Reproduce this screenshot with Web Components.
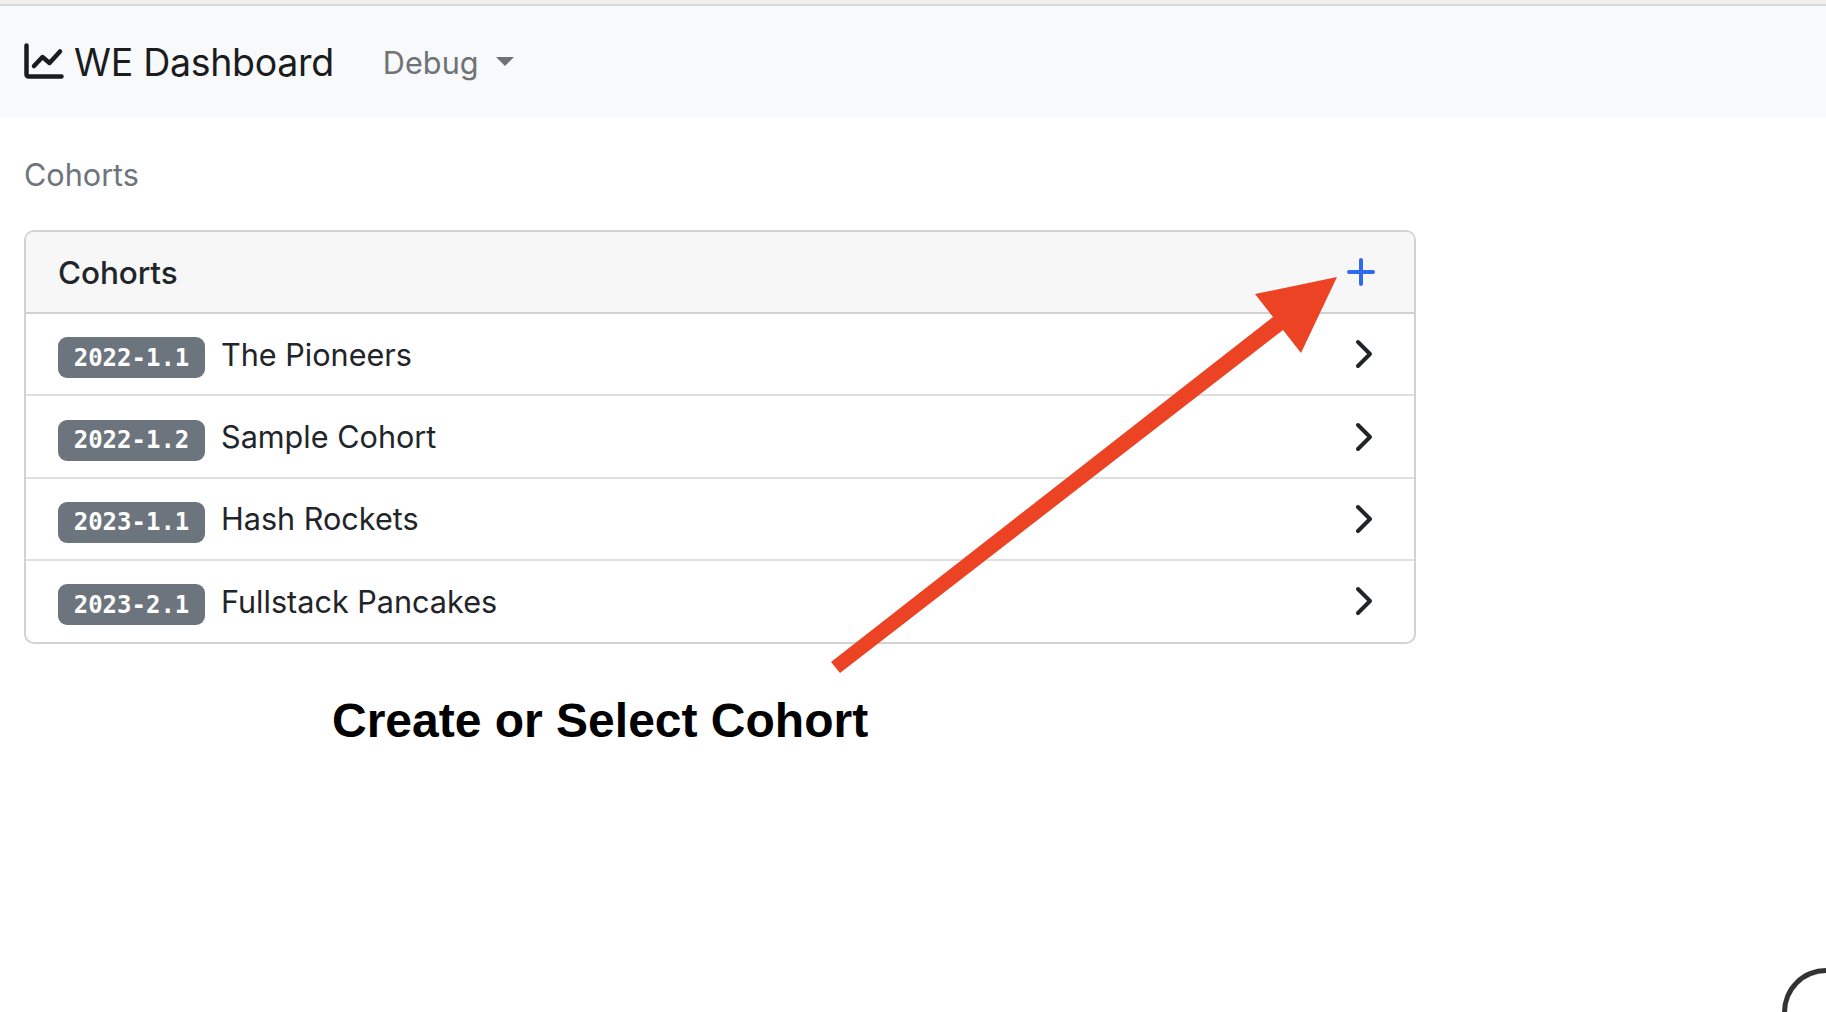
<!DOCTYPE html>
<html>
<head>
<meta charset="utf-8">
<title>WE Dashboard</title>
<style>
  html, body { margin: 0; height: 100%; background: #fff; overflow: hidden; }
  body { position: relative; font-family: Inter, "Liberation Sans", sans-serif; color: #212529; }
</style>
</head>
<body>
<we-navbar brand="WE Dashboard" menu="Debug"></we-navbar>
<we-breadcrumb>Cohorts</we-breadcrumb>
<we-card heading="Cohorts">
  <we-cohort-row code="2022-1.1">The Pioneers</we-cohort-row>
  <we-cohort-row code="2022-1.2">Sample Cohort</we-cohort-row>
  <we-cohort-row code="2023-1.1">Hash Rockets</we-cohort-row>
  <we-cohort-row code="2023-2.1">Fullstack Pancakes</we-cohort-row>
</we-card>
<we-annotation>Create or Select Cohort</we-annotation>
<we-help-button></we-help-button>

<script>
class WeNavbar extends HTMLElement {
  constructor() {
    super();
    const root = this.attachShadow({ mode: 'open' });
    root.innerHTML = `
      <style>
        :host { display: block; background: #f8f9fa; }
        .strip { height: 4px; background: #f1f0ee; border-bottom: 2px solid #d6d9dd; }
        .bar { height: 112px; display: flex; align-items: center; padding-left: 24px; }
        .brand { display: flex; align-items: center; gap: 10px; font-size: 37.500px; color: #1a1c1e; letter-spacing: -0.3px; }
        .brand svg { width: 40px; height: 36px; flex: none; margin-top: -2px; }
        .menu { display: flex; align-items: center; margin-left: 49px; font-size: 30.600px; color: #6f7276; }
        .menu span { letter-spacing: 0.05px; }
        .caret { width: 0; height: 0; margin-left: 17px; margin-top: -2px; border: 9px solid transparent; border-top-color: #6f7276; border-bottom: 0; }
      </style>
      <div class="strip"></div>
      <div class="bar">
        <div class="brand">
          <svg viewBox="0 0 40 36" fill="none" stroke="#1a1c1e" stroke-linecap="round" stroke-linejoin="round">
            <path d="M2.500 2.500v29a2 2 0 0 0 2 2H37.500" stroke-width="4.500"/>
            <path d="M10 23l8.500-9 7 6L36 8.500" stroke-width="4.500"/>
          </svg>
          <span></span>
        </div>
        <div class="menu"><span></span><i class="caret"></i></div>
      </div>`;
    root.querySelector('.brand span').textContent = this.getAttribute('brand');
    root.querySelector('.menu span').textContent = this.getAttribute('menu');
  }
}

class WeBreadcrumb extends HTMLElement {
  constructor() {
    super();
    const root = this.attachShadow({ mode: 'open' });
    root.innerHTML = `
      <style>
        :host { display: block; padding: 38px 24px 0; font-size: 30.600px; line-height: 37px; color: #6c757d; }
      </style>
      <slot></slot>`;
  }
}

class WeCard extends HTMLElement {
  constructor() {
    super();
    const root = this.attachShadow({ mode: 'open' });
    root.innerHTML = `
      <style>
        :host { display: block; box-sizing: border-box; width: 1392px; margin: 37px 0 0 24px; border: 2px solid #d2d2d2; border-radius: 10px; overflow: hidden; }
        .head { height: 82px; box-sizing: border-box; display: flex; align-items: center; justify-content: space-between; padding: 0 39px 0 32px; background: #f7f7f7; border-bottom: 2px solid #d2d2d2; font-size: 31.500px; font-weight: 500; color: #212529; letter-spacing: -0.1px; }
        svg { width: 28px; height: 28px; }
      </style>
      <div class="head">
        <span></span>
        <svg viewBox="0 0 28 28" fill="none" stroke="#2f6bf0" stroke-width="4" stroke-linecap="round"><path d="M14 2v24M2 14h24"/></svg>
      </div>
      <slot></slot>`;
    root.querySelector('.head span').textContent = this.getAttribute('heading');
  }
}

class WeCohortRow extends HTMLElement {
  constructor() {
    super();
    const root = this.attachShadow({ mode: 'open' });
    root.innerHTML = `
      <style>
        :host { display: flex; align-items: center; box-sizing: border-box; height: 82.400px; padding: 0 40px 0 32px; border-bottom: 2px solid #dfdfdf; font-size: 30.600px; color: #212529; }
        :host(:last-child) { border-bottom: 0; height: 80.500px; }
        .code { box-sizing: border-box; width: 147px; height: 41px; margin-top: 7px; display: flex; align-items: center; justify-content: center; background: #6c757d; border-radius: 9px; color: #fff; font: 700 24px "DejaVu Sans Mono", "Liberation Mono", monospace; }
        .name { flex: 1; margin-left: 16px; }
        svg { width: 20px; height: 30px; flex: none; }
      </style>
      <span class="code"></span>
      <span class="name"><slot></slot></span>
      <svg viewBox="0 0 20 30" fill="none" stroke="#212529" stroke-width="4" stroke-linecap="round" stroke-linejoin="round"><path d="M4 3l12 12L4 27"/></svg>`;
    root.querySelector('.code').textContent = this.getAttribute('code');
  }
}

// screenshot markup drawn over the page, the arrow and caption sit on a free canvas
class WeAnnotation extends HTMLElement {
  constructor() {
    super();
    const root = this.attachShadow({ mode: 'open' });
    root.innerHTML = `
      <style>
        :host { position: absolute; left: 0; top: 0; width: 1826px; height: 1012px; pointer-events: none; }
        svg { position: absolute; left: 0; top: 0; }
        .caption { position: absolute; left: 332px; top: 693px; font: 700 48px "Liberation Sans", Arial, sans-serif; line-height: 56px; color: #000; white-space: nowrap; }
      </style>
      <svg width="1826" height="1012" viewBox="0 0 1826 1012">
        <polygon fill="#ec4325" points="1337,277 1301,353 1283,330 840,673 831,662 1273,317 1255,294"/>
      </svg>
      <div class="caption"><slot></slot></div>`;
  }
}

class WeHelpButton extends HTMLElement {
  constructor() {
    super();
    const root = this.attachShadow({ mode: 'open' });
    root.innerHTML = `
      <style>
        :host { position: absolute; left: 1782px; top: 968px; width: 110px; height: 44px; box-sizing: border-box; border: 5px solid #333; border-bottom: 0; border-radius: 55px 55px 0 0; background: #fff; }
      </style>`;
  }
}

customElements.define('we-navbar', WeNavbar);
customElements.define('we-breadcrumb', WeBreadcrumb);
customElements.define('we-card', WeCard);
customElements.define('we-cohort-row', WeCohortRow);
customElements.define('we-annotation', WeAnnotation);
customElements.define('we-help-button', WeHelpButton);
</script>
</body>
</html>
